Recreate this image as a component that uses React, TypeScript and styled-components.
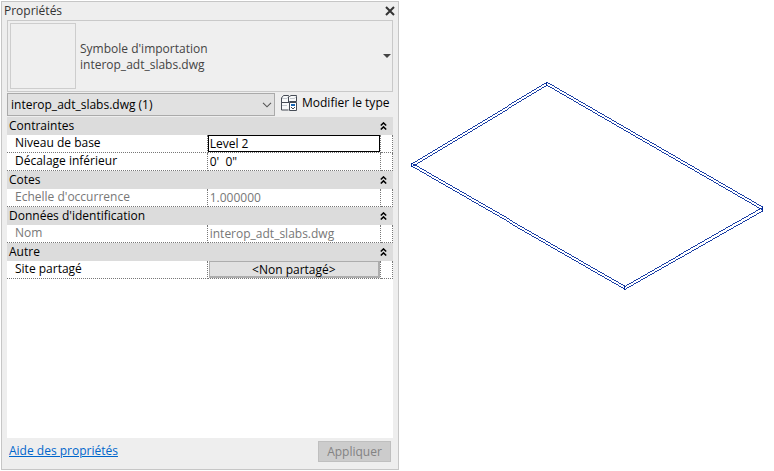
import React from "react";
import styled, { createGlobalStyle } from "styled-components";

const GlobalStyle = createGlobalStyle`
  * { box-sizing: border-box; }
  body { margin: 0; background: #fff; }
  body, button, input, select {
    font-family: "Open Sans", "Noto Sans", sans-serif;
    font-size: 12px;
    line-height: 16px;
    color: #000;
  }
`;

const Page = styled.main`
  display: grid;
  grid-template-columns: 398fr 375fr;
  min-height: 100vh;
  padding: 1px 0 1px 1px;
`;

const Panel = styled.section`
  display: flex;
  flex-direction: column;
  min-width: 0;
  padding: 0 5px;
  background: #eee;
  border: 1px solid #c6c6c6;
`;

const TitleBar = styled.header`
  display: flex;
  align-items: center;
  justify-content: space-between;
  height: 18px;
  margin-left: -3px;
`;

const Title = styled.h1`
  margin: 0;
  font-size: 12px;
  font-weight: 400;
  color: #333;
`;

const CloseButton = styled.button`
  display: flex;
  padding: 0;
  margin-right: -3px;
  border: 0;
  background: none;
`;

const TypeSelector = styled.button`
  display: flex;
  align-items: center;
  flex: none;
  width: 100%;
  padding: 2px 1px 2px 2px;
  border: 1px solid #c9c9c9;
  background: #efefef;
  text-align: left;
`;

const Thumbnail = styled.span`
  flex: none;
  width: 66px;
  height: 66px;
  margin-right: 4px;
  border: 1px solid #cdcdcd;
`;

const TypeName = styled.span`
  flex: 1;
  padding-top: 2px;
  color: #444;
`;

const InstanceBar = styled.div`
  display: grid;
  grid-template-columns: minmax(0, 268fr) minmax(0, 118fr);
  align-items: start;
  height: 25px;
  padding-top: 1px;
`;

const SelectWrap = styled.div`
  display: grid;
  align-items: center;
  & > * { grid-area: 1 / 1; }
  & > svg { justify-self: end; margin-right: 3px; pointer-events: none; }
`;

const InstanceSelect = styled.select`
  appearance: none;
  width: 100%;
  height: 23px;
  padding: 0 20px 0 3px;
  border: 1px solid #aaa;
  border-radius: 0;
  background: #e1e1e1;
`;

const EditTypeButton = styled.button`
  display: flex;
  gap: 4px;
  padding: 2px 0 0 6px;
  border: 0;
  background: none;
  white-space: nowrap;
  & > svg { flex: none; }
`;

const Sheet = styled.div`
  flex: 1;
  background: #fff;
`;

const PropertyTable = styled.table`
  width: 100%;
  table-layout: fixed;
  border-collapse: separate;
  border-spacing: 0;
`;

const LabelCol = styled.col`width: 52%;`;
const MarkCol = styled.col`width: 12px;`;

const GroupHeading = styled.th`
  height: 18px;
  padding: 0 0 0 2px;
  background: #dcdcdc;
  font-weight: 400;
  text-align: left;
`;

const GroupLine = styled.div`
  display: flex;
  align-items: center;
  justify-content: space-between;
  height: 18px;
`;

const FoldButton = styled.button`
  display: flex;
  padding: 0 6px 1px;
  border: 0;
  background: none;
`;

const Label = styled.th<{ $muted?: boolean }>`
  height: 18px;
  padding: 0 0 1px 8px;
  border-right: 1px dotted #777;
  border-bottom: 1px dotted #777;
  font-weight: 400;
  text-align: left;
  color: ${(p) => (p.$muted ? "#777" : "#000")};
`;

const Value = styled.td`
  height: 18px;
  padding: 0;
  border-right: 1px dotted #777;
  border-bottom: 1px dotted #777;
`;

const ValueInput = styled.input<{ $active?: boolean }>`
  display: block;
  width: 100%;
  height: 17px;
  padding: 0 1px 1px;
  border: 1px solid ${(p) => (p.$active ? "#000" : "transparent")};
  background: transparent;
  outline: 0;
  color: #000;
  &:disabled { color: #777; }
`;

const SiteButton = styled.button`
  display: block;
  width: calc(100% - 1px);
  height: 17px;
  margin-left: 1px;
  padding: 0;
  border: 1px solid #adadad;
  border-right-width: 2px;
  border-bottom-width: 2px;
  background: #e1e1e1;
  line-height: 16px;
`;

const Footer = styled.footer`
  display: flex;
  align-items: center;
  justify-content: space-between;
  height: 31px;
  padding: 0 2px;
`;

const HelpLink = styled.a`
  margin-bottom: 5px;
  color: #0066cc;
  text-decoration: underline;
`;

const ApplyButton = styled.button`
  width: 73px;
  height: 21px;
  margin-bottom: 4px;
  padding: 0;
  border: 1px solid #bfbfbf;
  background: #ccc;
  color: #838383;
`;

const View = styled.section`
  min-width: 0;
  & > svg { display: block; width: 100%; height: auto; }
`;

const CloseIcon = () => (
  <svg width="11" height="11" viewBox="0 0 11 11" aria-hidden="true">
    <path d="M1 1 9 9M9 1 1 9" stroke="#333" strokeWidth="2" />
  </svg>
);

const CaretIcon = () => (
  <svg width="8" height="4" viewBox="0 0 8 4" aria-hidden="true">
    <path d="M0 0H8L4 4Z" fill="#444" />
  </svg>
);

const ChevronIcon = () => (
  <svg width="10" height="6" viewBox="0 0 10 6" aria-hidden="true">
    <path d="M1 .8 5 4.8 9 .8" fill="none" stroke="#555" strokeWidth="1.1" />
  </svg>
);

const FoldIcon = () => (
  <svg width="7" height="8" viewBox="0 0 7 8" aria-hidden="true">
    <path d="M.8 3.5 3.5.9 6.2 3.5M.8 7.5 3.5 4.9 6.2 7.5" fill="none" stroke="#000" strokeWidth="1.5" />
  </svg>
);

const EditTypeIcon = () => (
  <svg width="17" height="17" viewBox="0 0 17 17" aria-hidden="true">
    <g fill="#f8f9fa" stroke="#454b55">
      <path d="M.5 7.5V3L2.5.5H7.5L8.5 1.5 10 .5H15.5V6.5H8.5V7.5Z" />
      <path d="M8 7.5H.5V15H7.5" />
      <path d="M1 3.5H6L7.5 1.5M9 3.5H13.5L15 1.5M1 10.5H6" stroke="#c3c8ce" />
      <path d="M7.5 1.5V8M.5 7.5H8" />
      <path d="M8.5 7.5H15.5V15.5H8.5Z" fill="#fff" />
    </g>
    <path d="M10 9H14V11H10Z" fill="#1464b4" />
    <path d="M10 12H11V13H10ZM13 12H14V13H13ZM11 13H13V14H11Z" fill="#454b55" />
  </svg>
);

type Property = {
  id: string;
  label: string;
  value: string;
  state?: "active" | "disabled" | "button";
};

const groups: { name: string; items: Property[] }[] = [
  {
    name: "Contraintes",
    items: [
      { id: "level", label: "Niveau de base", value: "Level 2", state: "active" },
      { id: "offset", label: "Décalage inférieur", value: "0'  0\"" },
    ],
  },
  { name: "Cotes", items: [{ id: "scale", label: "Echelle d'occurrence", value: "1.000000", state: "disabled" }] },
  {
    name: "Données d'identification",
    items: [{ id: "name", label: "Nom", value: "interop_adt_slabs.dwg", state: "disabled" }],
  },
  { name: "Autre", items: [{ id: "site", label: "Site partagé", value: "<Non partagé>", state: "button" }] },
];

const PropertyRow = ({ item }: { item: Property }) => (
  <tr>
    <Label scope="row" $muted={item.state === "disabled"}>
      <label htmlFor={item.id}>{item.label}</label>
    </Label>
    <Value>
      {item.state === "button" ? (
        <SiteButton id={item.id} type="button">{item.value}</SiteButton>
      ) : (
        <ValueInput
          id={item.id}
          defaultValue={item.value}
          $active={item.state === "active"}
          disabled={item.state === "disabled"}
        />
      )}
    </Value>
    <Value />
  </tr>
);

const SlabDrawing = () => (
  <svg viewBox="0 0 375 469" role="img" aria-label="Slab">
    <g fill="none" stroke="#00289a" strokeWidth="0.9" shapeRendering="crispEdges">
      <path d="M12.5 162.5 147.5 81.5 363.5 206.5 225.5 285Z" />
      <path d="M12.5 165.5 147.5 84.5 363.5 209.5 225.5 288Z" />
      <path d="M12.5 162V166M147.5 81V85M363.5 206V210M225.5 285V289" strokeWidth="1" />
    </g>
  </svg>
);

export default function App() {
  return (
    <>
      <GlobalStyle />
      <Page>
        <Panel>
          <TitleBar>
            <Title>Propriétés</Title>
            <CloseButton type="button" aria-label="Fermer"><CloseIcon /></CloseButton>
          </TitleBar>
          <TypeSelector type="button">
            <Thumbnail />
            <TypeName>Symbole d'importation<br />interop_adt_slabs.dwg</TypeName>
            <CaretIcon />
          </TypeSelector>
          <InstanceBar>
            <SelectWrap>
              <InstanceSelect aria-label="Occurrence">
                <option>interop_adt_slabs.dwg (1)</option>
              </InstanceSelect>
              <ChevronIcon />
            </SelectWrap>
            <EditTypeButton type="button"><EditTypeIcon />Modifier le type</EditTypeButton>
          </InstanceBar>
          <Sheet>
            <PropertyTable>
              <colgroup><LabelCol /><col /><MarkCol /></colgroup>
              {groups.map((group) => (
                <tbody key={group.name}>
                  <tr>
                    <GroupHeading colSpan={3} scope="rowgroup">
                      <GroupLine>
                        {group.name}
                        <FoldButton type="button" aria-label={`Réduire ${group.name}`}><FoldIcon /></FoldButton>
                      </GroupLine>
                    </GroupHeading>
                  </tr>
                  {group.items.map((item) => <PropertyRow key={item.id} item={item} />)}
                </tbody>
              ))}
            </PropertyTable>
          </Sheet>
          <Footer>
            <HelpLink href="#aide">Aide des propriétés</HelpLink>
            <ApplyButton type="button" disabled>Appliquer</ApplyButton>
          </Footer>
        </Panel>
        <View><SlabDrawing /></View>
      </Page>
    </>
  );
}
